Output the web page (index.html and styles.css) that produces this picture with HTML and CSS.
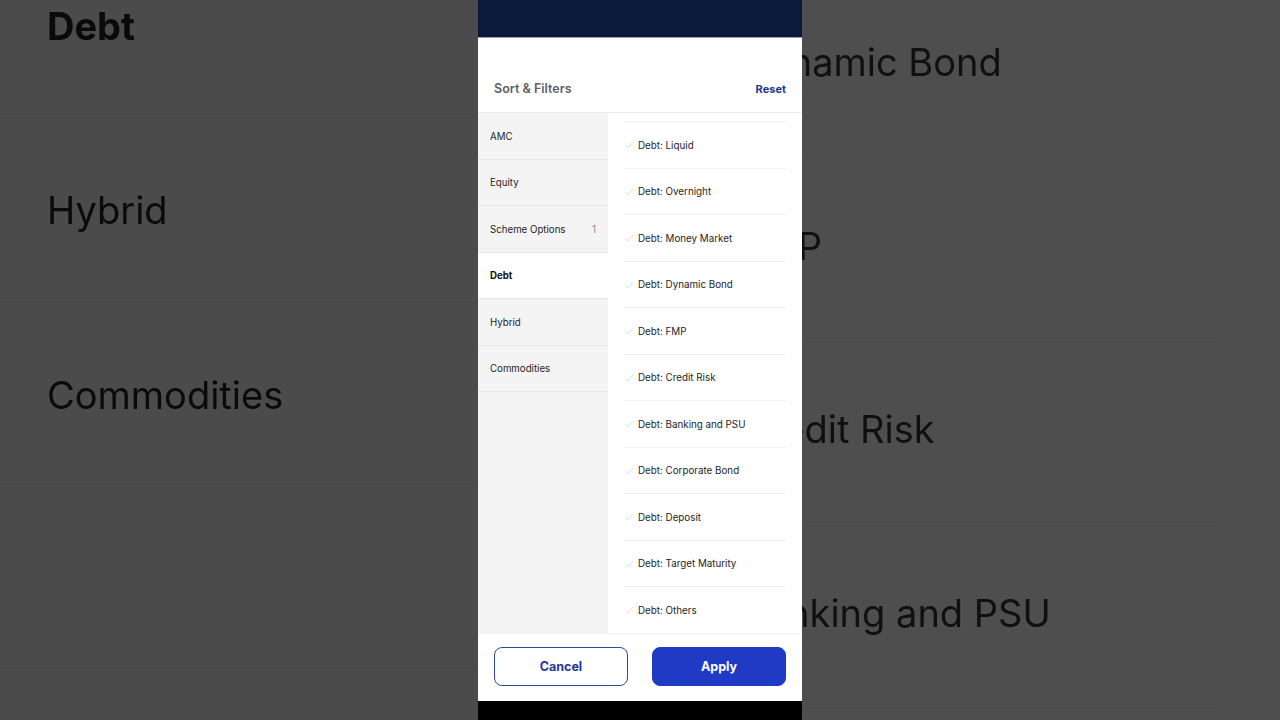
FILE: index.html
```html
<!DOCTYPE html>
<html>
<head>
<meta charset="utf-8">
<link rel="stylesheet" href="styles.css">
</head>
<body>
<div class="stage">
  <div class="bg bg-left">
    <div class="bg-row first"><span class="bg-text bold">Debt</span></div>
    <div class="bg-row"><span class="bg-text">Hybrid</span></div>
    <div class="bg-row"><span class="bg-text">Commodities</span></div>
    <div class="bg-row"></div>
  </div>

  <div class="phone">
    <div class="statusbar"></div>
    <div class="header">
      <span class="title">Sort &amp; Filters</span>
      <span class="reset">Reset</span>
    </div>
    <div class="content">
      <ul class="side">
        <li class="side-item">AMC</li>
        <li class="side-item">Equity</li>
        <li class="side-item">Scheme Options<span class="count">1</span></li>
        <li class="side-item active">Debt</li>
        <li class="side-item">Hybrid</li>
        <li class="side-item">Commodities</li>
      </ul>
      <div class="list-wrap">
        <ul class="list">
          <li class="opt"><svg class="check" viewBox="0 0 10 8"><path d="M1 4.2 L3.8 7 L9 1"/></svg>Debt: Liquid</li>
          <li class="opt"><svg class="check" viewBox="0 0 10 8"><path d="M1 4.2 L3.8 7 L9 1"/></svg>Debt: Overnight</li>
          <li class="opt"><svg class="check" viewBox="0 0 10 8"><path d="M1 4.2 L3.8 7 L9 1"/></svg>Debt: Money Market</li>
          <li class="opt"><svg class="check" viewBox="0 0 10 8"><path d="M1 4.2 L3.8 7 L9 1"/></svg>Debt: Dynamic Bond</li>
          <li class="opt"><svg class="check" viewBox="0 0 10 8"><path d="M1 4.2 L3.8 7 L9 1"/></svg>Debt: FMP</li>
          <li class="opt"><svg class="check" viewBox="0 0 10 8"><path d="M1 4.2 L3.8 7 L9 1"/></svg>Debt: Credit Risk</li>
          <li class="opt"><svg class="check" viewBox="0 0 10 8"><path d="M1 4.2 L3.8 7 L9 1"/></svg>Debt: Banking and PSU</li>
          <li class="opt"><svg class="check" viewBox="0 0 10 8"><path d="M1 4.2 L3.8 7 L9 1"/></svg>Debt: Corporate Bond</li>
          <li class="opt"><svg class="check" viewBox="0 0 10 8"><path d="M1 4.2 L3.8 7 L9 1"/></svg>Debt: Deposit</li>
          <li class="opt"><svg class="check" viewBox="0 0 10 8"><path d="M1 4.2 L3.8 7 L9 1"/></svg>Debt: Target Maturity</li>
          <li class="opt"><svg class="check" viewBox="0 0 10 8"><path d="M1 4.2 L3.8 7 L9 1"/></svg>Debt: Others</li>
        </ul>
      </div>
    </div>
    <div class="footer">
      <button class="btn btn-outline">Cancel</button>
      <button class="btn btn-fill">Apply</button>
    </div>
    <div class="homebar"></div>
  </div>

  <div class="bg bg-right">
    <div class="bg-row r first"><span class="bg-text r-text">Debt: Dynamic Bond</span></div>
    <div class="bg-row r"><span class="bg-text r-text">Debt: FMP</span></div>
    <div class="bg-row r"><span class="bg-text r-text">Debt: Credit Risk</span></div>
    <div class="bg-row r"><span class="bg-text r-text">Debt: Banking and PSU</span></div>
  </div>
</div>
</body>
</html>
```

FILE: styles.css
```css
* { box-sizing: border-box; }
html, body { margin: 0; padding: 0; }
body {
  width: 1280px;
  height: 720px;
  overflow: hidden;
  font-family: Inter, "Noto Sans", "Liberation Sans", sans-serif;
  background: #4b4b4b;
}
ul { list-style: none; margin: 0; padding: 0; }

.stage {
  display: flex;
  width: 1280px;
  height: 720px;
}

/* blurred zoomed backdrop */
.bg {
  height: 720px;
  overflow: hidden;
  display: flex;
  flex-direction: column;
}
.bg-left {
  width: 478px;
  background: #4b4b4b;
}
.bg-right {
  flex: 1;
  background: #4e4e4e;
}
.bg-row {
  flex: none;
  height: 184.5px;
  display: flex;
  align-items: center;
  padding-left: 47px;
  border-bottom: 1px solid #474747;
}
.bg-left .bg-row.first { margin-top: -66px; }
.bg-row.r {
  height: 183.5px;
  padding-left: 0;
  width: 414px;
  border-bottom: 1px solid #4a4a4a;
}
.bg-right .bg-row.first { margin-top: -29px; }
.bg-text {
  font-size: 38px;
  color: #0a0a0a;
  white-space: nowrap;
  filter: blur(0.7px);
}
.bg-text.bold { font-weight: 700; }
.r-text {
  color: #101010;
  margin-left: -168px;
}

/* phone */
.phone {
  width: 324px;
  height: 720px;
  flex: none;
  display: flex;
  flex-direction: column;
  background: #fff;
}
.statusbar {
  height: 38px;
  background: #0b1a3a;
  border-bottom: 1px solid #9aa0ae;
}
.header {
  height: 75px;
  display: flex;
  align-items: flex-end;
  justify-content: space-between;
  padding: 0 16px 15px;
  border-bottom: 1px solid #ececec;
}
.title {
  font-size: 12.5px;
  line-height: 16px;
  font-weight: 600;
  color: #5f5f63;
}
.reset {
  font-size: 11px;
  line-height: 16px;
  font-weight: 700;
  color: #1f3a8f;
}

.content {
  height: 520px;
  display: flex;
}
.side {
  width: 130px;
  background: #f4f4f4;
  flex: none;
}
.side-item {
  height: 46.5px;
  display: flex;
  align-items: center;
  justify-content: space-between;
  padding: 1px 12px 0 12px;
  font-size: 9.7px;
  color: #1e1e1e;
  border-bottom: 1px solid #e6e6e6;
}
.side-item.active {
  background: #fff;
  font-weight: 700;
  color: #111;
}
.count {
  color: #8a8a8a;
  font-size: 9.7px;
}

.list-wrap {
  flex: 1;
  padding: 8px 16px 0;
  overflow: hidden;
}
.list { border-top: 1px solid #f0f0f0; }
.opt {
  height: 46.5px;
  display: flex;
  align-items: center;
  padding-top: 1px;
  font-size: 9.8px;
  color: #1e1e1e;
  border-bottom: 1px solid #f0f0f0;
}
.check {
  width: 10px;
  height: 8px;
  margin-right: 4px;
  fill: none;
  stroke: #dedede;
  stroke-width: 1;
}

.footer {
  height: 68px;
  display: flex;
  gap: 24px;
  padding: 13px 16px 0;
  border-top: 1px solid #f3f3f3;
}
.btn {
  width: 134px;
  height: 39px;
  border-radius: 8px;
  font-family: inherit;
  font-size: 12.5px;
  font-weight: 700;
  cursor: pointer;
}
.btn-outline {
  background: #fff;
  border: 1px solid #3049a0;
  color: #1f3a93;
}
.btn-fill {
  background: #1f3bc6;
  border: 1px solid #1f3bc6;
  color: #fff;
}
.homebar {
  flex: 1;
  background: #000;
}
```
